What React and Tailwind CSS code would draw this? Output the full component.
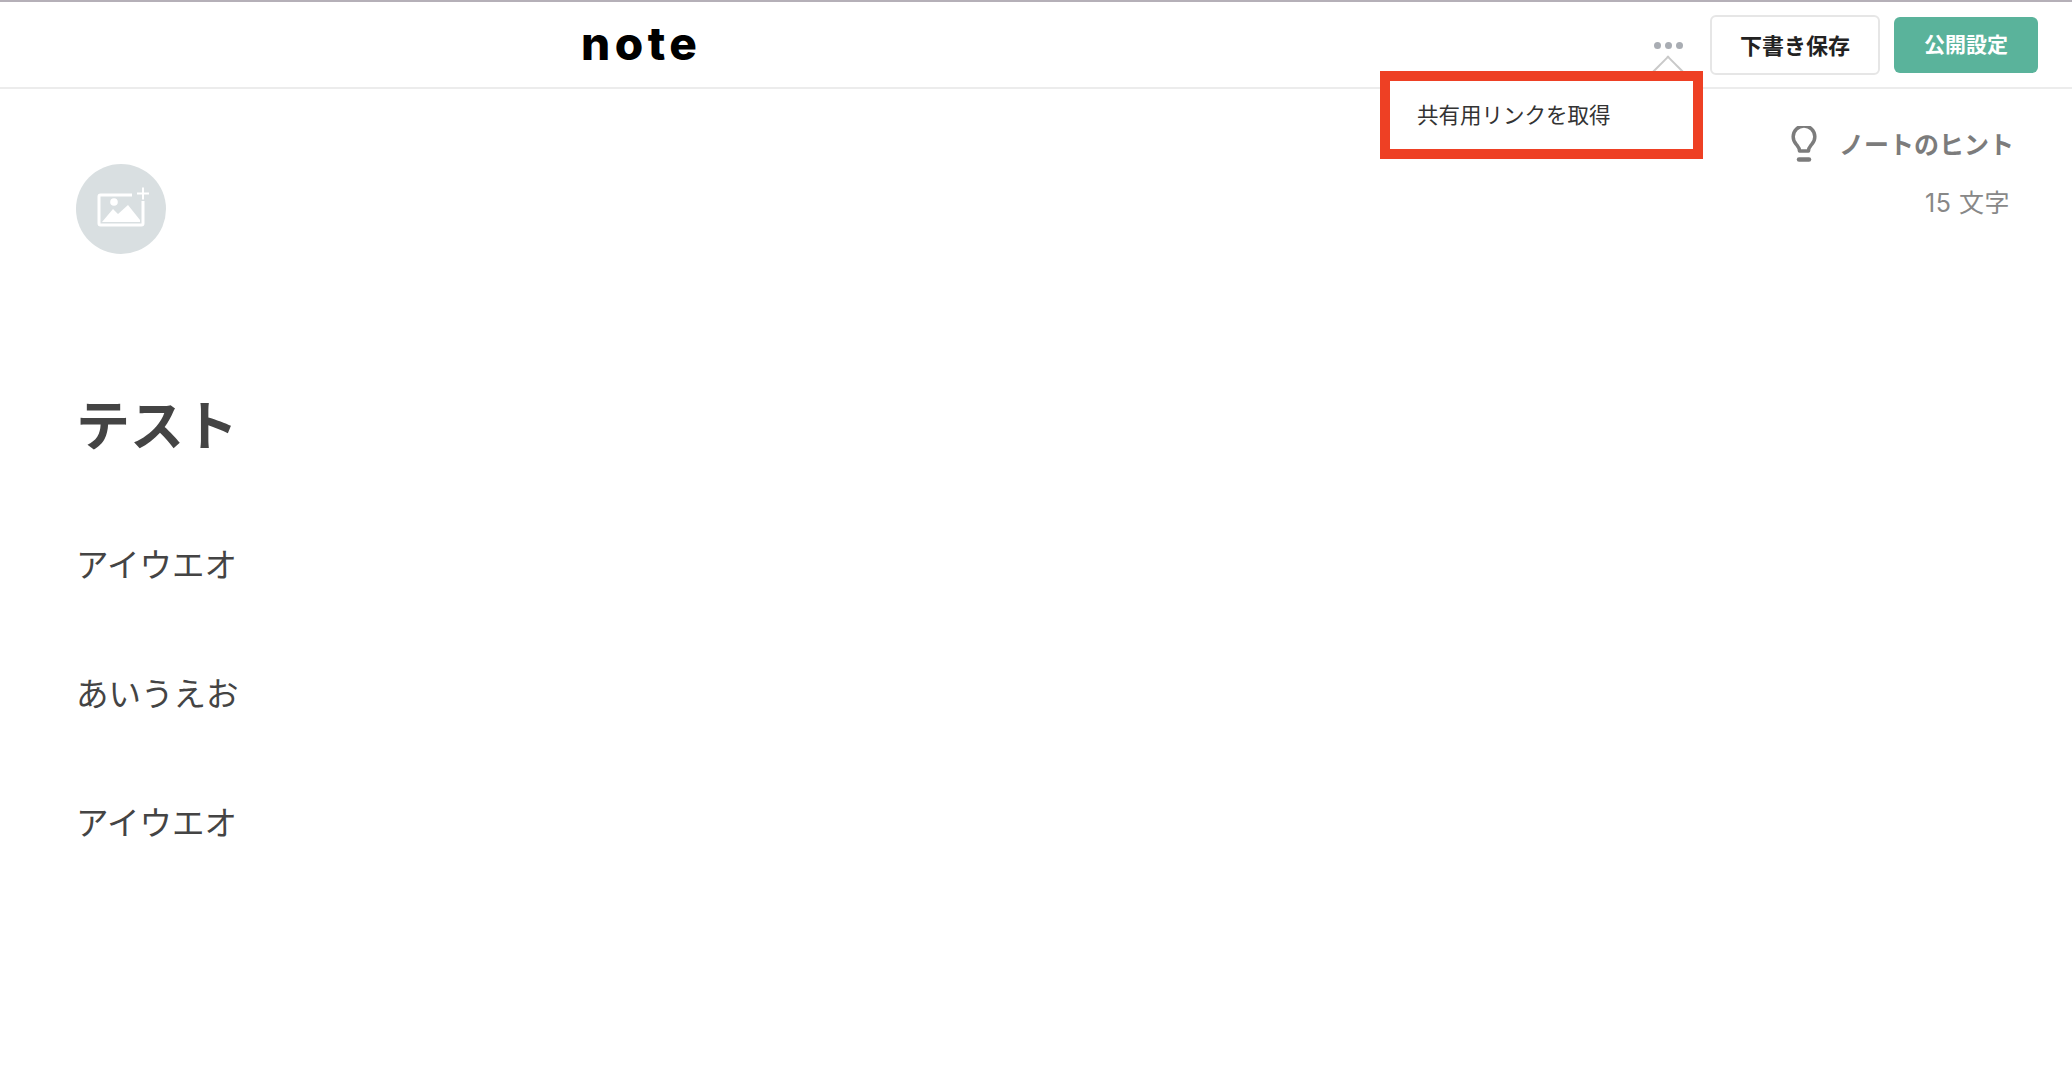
const JP = "font-['Noto_Sans_CJK_JP',sans-serif]";

function ImageAddIcon() {
  return (
    <svg width="54" height="41" viewBox="0 0 54 41" fill="none" className="ml-[6px] mb-[4px] block">
      <path d="M35 8H3.500a1.500 1.500 0 0 0-1.500 1.500v27a1.500 1.500 0 0 0 1.500 1.500h41a1.500 1.500 0 0 0 1.500-1.500V14" stroke="#fff" strokeWidth="3" />
      <circle cx="17" cy="15" r="3.800" fill="#fff" />
      <path d="M5 35 L16 22 L21 27 L31 18 L43 33 V35 Z" fill="#fff" />
      <path d="M46 0.500V12.500M40 6.500H52" stroke="#fff" strokeWidth="2" />
    </svg>
  );
}

function BulbIcon() {
  return (
    <svg width="26" height="36" viewBox="0 0 26 36" fill="none" className="mt-[2px] block">
      <path d="M8.500 25c0-3.500-2-5-3.500-7a10.800 10.800 0 1 1 16 0c-1.500 2-3.500 3.500-3.500 7h-9Z" stroke="#7c7c7c" strokeWidth="3.500" strokeLinejoin="round" />
      <path d="M8 33.500h10" stroke="#7c7c7c" strokeWidth="4.500" strokeLinecap="round" />
    </svg>
  );
}

function Header() {
  return (
    <header className="relative flex h-[89px] items-center border-t-2 border-b-2 border-t-[#b5b0b8] border-b-[#ececec] bg-white pl-[581px] pr-[34px]">
      <div className="-mt-[4px] font-['Inter',sans-serif] text-[46px] leading-none font-extrabold tracking-[4.500px] text-black">note</div>

      <div className="ml-auto flex items-center pt-[1px]">
        <div className="relative mr-[27px] flex gap-[4px]">
          <span className="h-[7px] w-[7px] rounded-full bg-[#a9adb3]" />
          <span className="h-[7px] w-[7px] rounded-full bg-[#a9adb3]" />
          <span className="h-[7px] w-[7px] rounded-full bg-[#a9adb3]" />
        </div>
        <button className={`${JP} h-[60px] w-[170px] rounded-[6px] border-2 border-[#e6e6e6] bg-white pb-[2px] text-[22px] font-bold text-[#222]`}>
          下書き保存
        </button>
        <button className={`${JP} ml-[14px] h-[56px] w-[144px] rounded-[6px] bg-[#5ab39b] pb-[2px] text-[21px] font-bold text-white`}>
          公開設定
        </button>
      </div>

      {/* menu pointer */}
      <div className="absolute left-[1657px] top-[58px] h-[22px] w-[22px] rotate-45 border-t-2 border-l-2 border-[#c9c9c9] bg-white" />

      {/* share link menu */}
      <div className={`${JP} absolute left-[1380px] top-[69px] z-10 flex h-[88px] w-[323px] items-center border-[10px] border-[#ee4024] bg-white pb-[2px] pl-[27px] text-[21.500px] text-[#333]`}>
        共有用リンクを取得
      </div>
    </header>
  );
}

export default function App() {
  return (
    <div className={`${JP} min-h-[1092px] bg-white`}>
      <Header />
      <main className="flex justify-between pr-[58px] pl-[76px]">
        <div>
          <button className="mt-[75px] flex h-[90px] w-[90px] items-center justify-center rounded-full bg-[#d9dfe1]">
            <ImageAddIcon />
          </button>
          <h1 className="mt-[133px] text-[54px] leading-[72px] font-bold text-[#444]">テスト</h1>
          <div className="mt-[80px] flex flex-col gap-[81px] text-[32.500px] leading-[48px] text-[#444]">
            <p>アイウエオ</p>
            <p>あいうえお</p>
            <p>アイウエオ</p>
          </div>
        </div>

        <div className="flex flex-col items-end">
          <div className="mt-[35px] flex items-center gap-[22px]">
            <BulbIcon />
            <span className="text-[25px] leading-[36px] font-bold text-[#7c7c7c]">ノートのヒント</span>
          </div>
          <div className="mt-[23px] mr-[4px] font-['Inter','Noto_Sans_CJK_JP',sans-serif] text-[25px] leading-[36px] tracking-[0.500px] text-[#888]">15 文字</div>
        </div>
      </main>
    </div>
  );
}
